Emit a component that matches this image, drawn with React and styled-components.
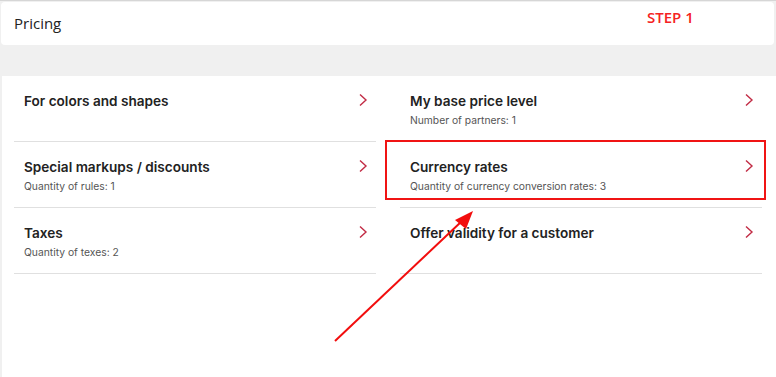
import React from 'react';
import styled, { createGlobalStyle } from 'styled-components';

const rows = [
	[
		{ title: 'For colors and shapes' },
		{ title: 'Special markups / discounts', sub: 'Quantity of rules: 1' },
		{ title: 'Taxes', sub: 'Quantity of texes: 2' },
	],
	[
		{ title: 'My base price level', sub: 'Number of partners: 1' },
		{ title: 'Currency rates', sub: 'Quantity of currency conversion rates: 3', marked: true },
		{ title: 'Offer validity for a customer' },
	],
];

const Chevron = () => (
	<svg width="10" height="14" viewBox="0 0 10 14">
		<path d="M2 1.5 L8 7 L2 12.5" fill="none" stroke="#c22c45" strokeWidth="1.4" />
	</svg>
);

const App = () => {
	return (
		<>
			<GlobalStyle />
			<Page>
				<Header>
					<HeaderTitle>Pricing</HeaderTitle>
					<Step>STEP 1</Step>
				</Header>
				<Spacer />
				<Panel>
					{rows.map((col, i) => (
						<Column key={i}>
							{col.map((item) => (
								<Row key={item.title}>
									<RowText>
										<RowTitle>{item.title}</RowTitle>
										{item.sub ? <RowSub>{item.sub}</RowSub> : null}
									</RowText>
									<Chevron />
									{item.marked ? <Highlight /> : null}
								</Row>
							))}
						</Column>
					))}
					<Arrow width="160" height="150" viewBox="0 0 160 150">
						<line x1="5" y1="141" x2="132" y2="21" stroke="#f20d0d" strokeWidth="2" />
						<polygon points="143,11 125,20 136,29" fill="#f20d0d" />
					</Arrow>
				</Panel>
			</Page>
		</>
	);
};

export default App;

const GlobalStyle = createGlobalStyle`
	html, body {
		margin: 0;
		padding: 0;
		background: #f0f0f0;
	}
	body {
		font-family: Inter, "Noto Sans", sans-serif;
	}
`;

const Page = styled.div`
	height: 377px;
	display: flex;
	flex-direction: column;
	border-top: 1px solid #d6d6d6;
	box-sizing: border-box;
	overflow: hidden;
`;

const Header = styled.div`
	margin: 1px 2px 0 1px;
	height: 43px;
	background: #fff;
	border-radius: 4px;
	display: flex;
	align-items: center;
	padding: 0 13px;
	position: relative;
`;

const HeaderTitle = styled.div`
	font-family: "Open Sans", sans-serif;
	font-size: 15px;
	color: #222;
	padding-bottom: 1px;
`;

const Step = styled.div`
	position: absolute;
	left: 646px;
	top: 5px;
	font-family: "Open Sans", sans-serif;
	font-weight: 600;
	font-size: 15px;
	color: #f52222;
`;

const Spacer = styled.div`
	height: 31px;
`;

const Panel = styled.div`
	flex: 1;
	margin-left: 2px;
	background: #fff;
	display: grid;
	grid-template-columns: 362px 362px;
	column-gap: 24px;
	padding: 0 12px 0 12px;
	position: relative;
`;

const Column = styled.div`
	display: flex;
	flex-direction: column;
`;

const Row = styled.div`
	height: 66px;
	border-bottom: 1px solid #e0e0e0;
	display: flex;
	justify-content: space-between;
	align-items: flex-start;
	padding: 17px 8px 0 10px;
	box-sizing: border-box;
	position: relative;

	svg {
		margin-top: 0;
	}
`;

const RowText = styled.div`
	display: flex;
	flex-direction: column;
	gap: 5px;
`;

const RowTitle = styled.div`
	font-size: 13.6px;
	font-weight: 600;
	color: #222;
`;

const RowSub = styled.div`
	font-size: 10.3px;
	color: #555;
`;

const Highlight = styled.div`
	position: absolute;
	left: -15px;
	top: -2px;
	width: 381px;
	height: 60px;
	border: 2px solid #f01414;
	box-sizing: border-box;
	pointer-events: none;
`;

const Arrow = styled.svg`
	position: absolute;
	left: 328px;
	top: 124px;
`;
